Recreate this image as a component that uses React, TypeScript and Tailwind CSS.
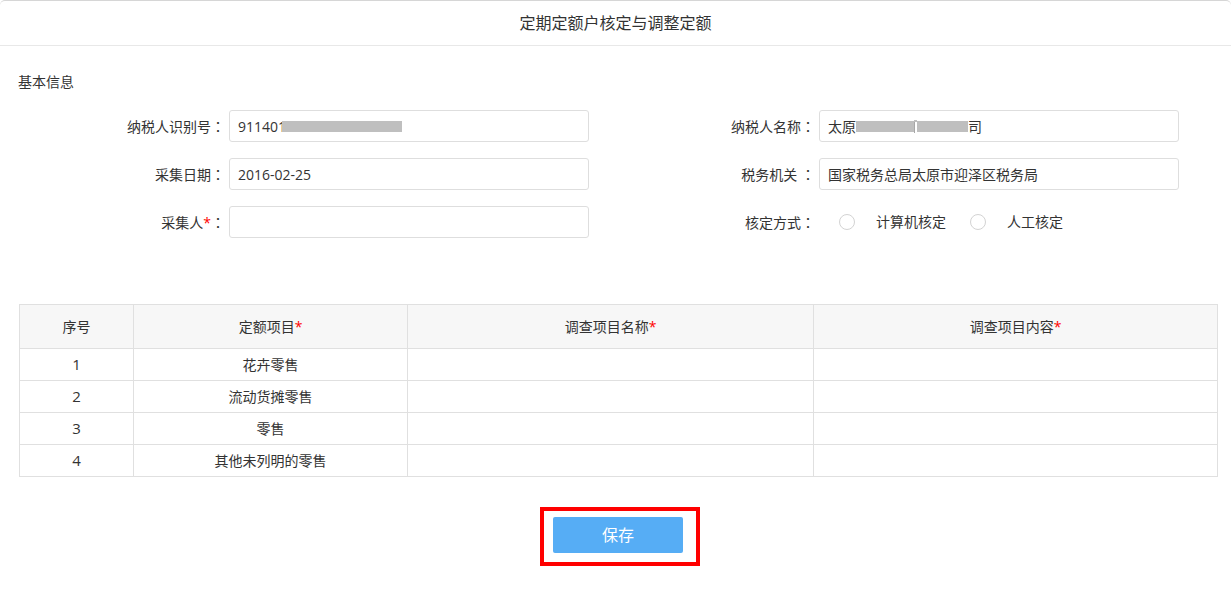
import React from "react";

const font = {
  fontFamily: '"Open Sans", "Noto Sans CJK SC", sans-serif',
};

function Colon() {
  return <span style={{ fontFamily: '"Noto Sans CJK TC", sans-serif' }}>：</span>;
}

function Label({ children }: { children: React.ReactNode }) {
  return (
    <div className="w-[225px] mr-[4px] text-right text-[14px] leading-[20px] text-[#333] whitespace-nowrap">
      {children}
    </div>
  );
}

function Input({ children }: { children?: React.ReactNode }) {
  return (
    <div className="w-[360px] h-[32px] border border-[#dedede] rounded-[3px] bg-white flex items-center pl-[8px] text-[14px] text-[#333] whitespace-nowrap">
      {children}
    </div>
  );
}

function Radio({ text }: { text: string }) {
  return (
    <div className="flex items-center">
      <span className="w-[16px] h-[16px] rounded-full border border-[#d3d3d3] bg-white" />
      <span className="ml-[21px] text-[14px] leading-[20px] text-[#333]">{text}</span>
    </div>
  );
}

const rows = ["花卉零售", "流动货摊零售", "零售", "其他未列明的零售"];

export default function App() {
  return (
    <div className="w-[1231px] h-[593px] bg-white overflow-hidden" style={font}>
      <div className="h-full border-t border-[#d6d6d6] rounded-tl-[5px] rounded-tr-[5px]">
        <div className="h-[45px] flex items-center justify-center border-b border-[#e8e8e8] text-[16px] text-[#333]">
          定期定额户核定与调整定额
        </div>

        <div className="pt-[26px] pl-[18px] h-[46px] text-[14px] leading-[20px] text-[#333]">基本信息</div>

        <div className="mt-[18px] flex flex-col gap-[16px]">
          <div className="flex">
            <div className="w-[590px] flex items-center">
              <Label>
                纳税人识别号<Colon />
              </Label>
              <Input>
                <span>911401</span>
                <span className="inline-block w-[120px] h-[11px] bg-[#bfbfbf] -ml-[4px]" />
              </Input>
            </div>
            <div className="w-[590px] flex items-center">
              <Label>
                纳税人名称<Colon />
              </Label>
              <Input>
                <span>太原</span>
                <span className="inline-block w-[58px] h-[11px] bg-[#bfbfbf]" />
                <span className="inline-flex flex-col w-[3px] h-[13px]">
                  <span className="h-[2px] bg-[#bfbfbf]" />
                  <span className="flex-1 bg-[#a8a8a8] w-[1px]" />
                </span>
                <span className="inline-block w-[51px] h-[11px] bg-[#bfbfbf]" />
                <span>司</span>
              </Input>
            </div>
          </div>
          <div className="flex">
            <div className="w-[590px] flex items-center">
              <Label>
                采集日期<Colon />
              </Label>
              <Input>2016-02-25</Input>
            </div>
            <div className="w-[590px] flex items-center">
              <Label>
                税务机关 <Colon />
              </Label>
              <Input>国家税务总局太原市迎泽区税务局</Input>
            </div>
          </div>
          <div className="flex">
            <div className="w-[590px] flex items-center">
              <Label>
                采集人<span className="text-[#ff0000]">*</span>
                <Colon />
              </Label>
              <Input />
            </div>
            <div className="w-[590px] flex items-center h-[32px]">
              <Label>
                核定方式<Colon />
              </Label>
              <div className="flex items-center gap-[24px] ml-[20px]">
                <Radio text="计算机核定" />
                <Radio text="人工核定" />
              </div>
            </div>
          </div>
        </div>

        <div className="mt-[66px] ml-[19px]">
          <table className="border-collapse table-fixed w-[1198px] text-[14px] text-[#333]">
            <colgroup>
              <col className="w-[114px]" />
              <col className="w-[274px]" />
              <col className="w-[406px]" />
              <col className="w-[404px]" />
            </colgroup>
            <thead>
              <tr className="h-[44px] bg-[#f7f7f7]">
                <th className="border border-[#e0e0e0] font-normal">序号</th>
                <th className="border border-[#e0e0e0] font-normal">
                  定额项目<span className="text-[#ff0000]">*</span>
                </th>
                <th className="border border-[#e0e0e0] font-normal">
                  调查项目名称<span className="text-[#ff0000]">*</span>
                </th>
                <th className="border border-[#e0e0e0] font-normal">
                  调查项目内容<span className="text-[#ff0000]">*</span>
                </th>
              </tr>
            </thead>
            <tbody>
              {rows.map((r, i) => (
                <tr key={i} className="h-[32px]">
                  <td className="border border-[#e0e0e0] text-center text-[15px]">{i + 1}</td>
                  <td className="border border-[#e0e0e0] text-center">{r}</td>
                  <td className="border border-[#e0e0e0]" />
                  <td className="border border-[#e0e0e0]" />
                </tr>
              ))}
            </tbody>
          </table>
        </div>

        <div className="mt-[30px] pl-[540px]">
          <div className="w-[160px] h-[59px] border-[4px] border-[#ff0000] pt-[6px] pl-[9px]">
            <div className="w-[130px] h-[36px] rounded-[2px] bg-[#56adf5] flex items-center justify-center text-[16px] text-white">
              保存
            </div>
          </div>
        </div>
      </div>
    </div>
  );
}
